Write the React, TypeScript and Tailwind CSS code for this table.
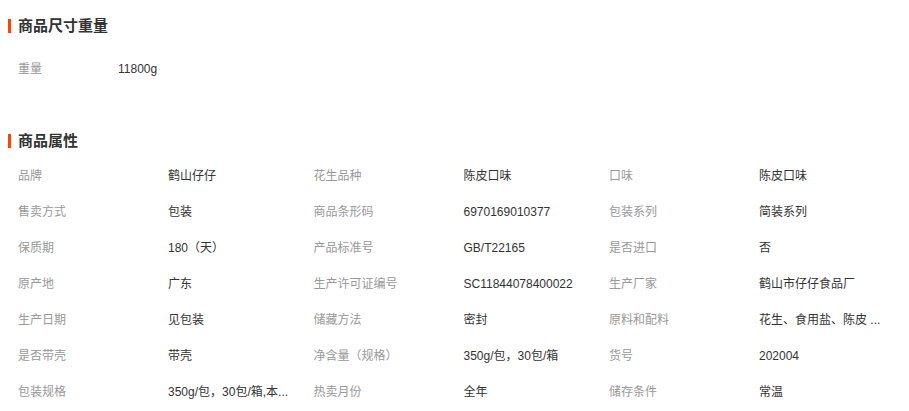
import React from "react";

const rows: [string, string][][] = [
  [["品牌", "鹤山仔仔"], ["花生品种", "陈皮口味"], ["口味", "陈皮口味"]],
  [["售卖方式", "包装"], ["商品条形码", "6970169010377"], ["包装系列", "简装系列"]],
  [["保质期", "180（天）"], ["产品标准号", "GB/T22165"], ["是否进口", "否"]],
  [["原产地", "广东"], ["生产许可证编号", "SC11844078400022"], ["生产厂家", "鹤山市仔仔食品厂"]],
  [["生产日期", "见包装"], ["储藏方法", "密封"], ["原料和配料", "花生、食用盐、陈皮 ..."]],
  [["是否带壳", "带壳"], ["净含量（规格）", "350g/包，30包/箱"], ["货号", "202004"]],
  [["包装规格", "350g/包，30包/箱,本..."], ["热卖月份", "全年"], ["储存条件", "常温"]],
];

function Title({ text }: { text: string }) {
  return (
    <div className="flex items-center h-[20px] pl-[8px]">
      <span className="w-[3px] h-[14px] bg-[#ff4400] mr-[7px]" />
      <span className="text-[15px] font-bold text-[#333]">{text}</span>
    </div>
  );
}

export default function App() {
  return (
    <div
      className="w-[909px] h-[411px] bg-white overflow-hidden text-[12px]"
      style={{ fontFamily: '"Liberation Sans", Tahoma, "Noto Sans CJK SC", sans-serif' }}
    >
      <div className="pt-[16px]">
        <Title text="商品尺寸重量" />
      </div>
      <div className="mt-[15px] flex items-center h-[36px] pl-[18px]">
        <span className="w-[100px] text-[#999]">重量</span>
        <span className="text-[#333]">11800g</span>
      </div>
      <div className="mt-[44px]">
        <Title text="商品属性" />
      </div>
      <div className="mt-[7px] pl-[18px]">
        {rows.map((r, i) => (
          <div key={i} className="flex h-[36px] items-center">
            {r.map(([k, v], j) => (
              <div key={j} className="flex items-center w-[295.5px]">
                <span className="w-[150px] shrink-0 text-[#999] whitespace-nowrap">{k}</span>
                <span className="text-[#333] whitespace-nowrap">{v}</span>
              </div>
            ))}
          </div>
        ))}
      </div>
    </div>
  );
}
